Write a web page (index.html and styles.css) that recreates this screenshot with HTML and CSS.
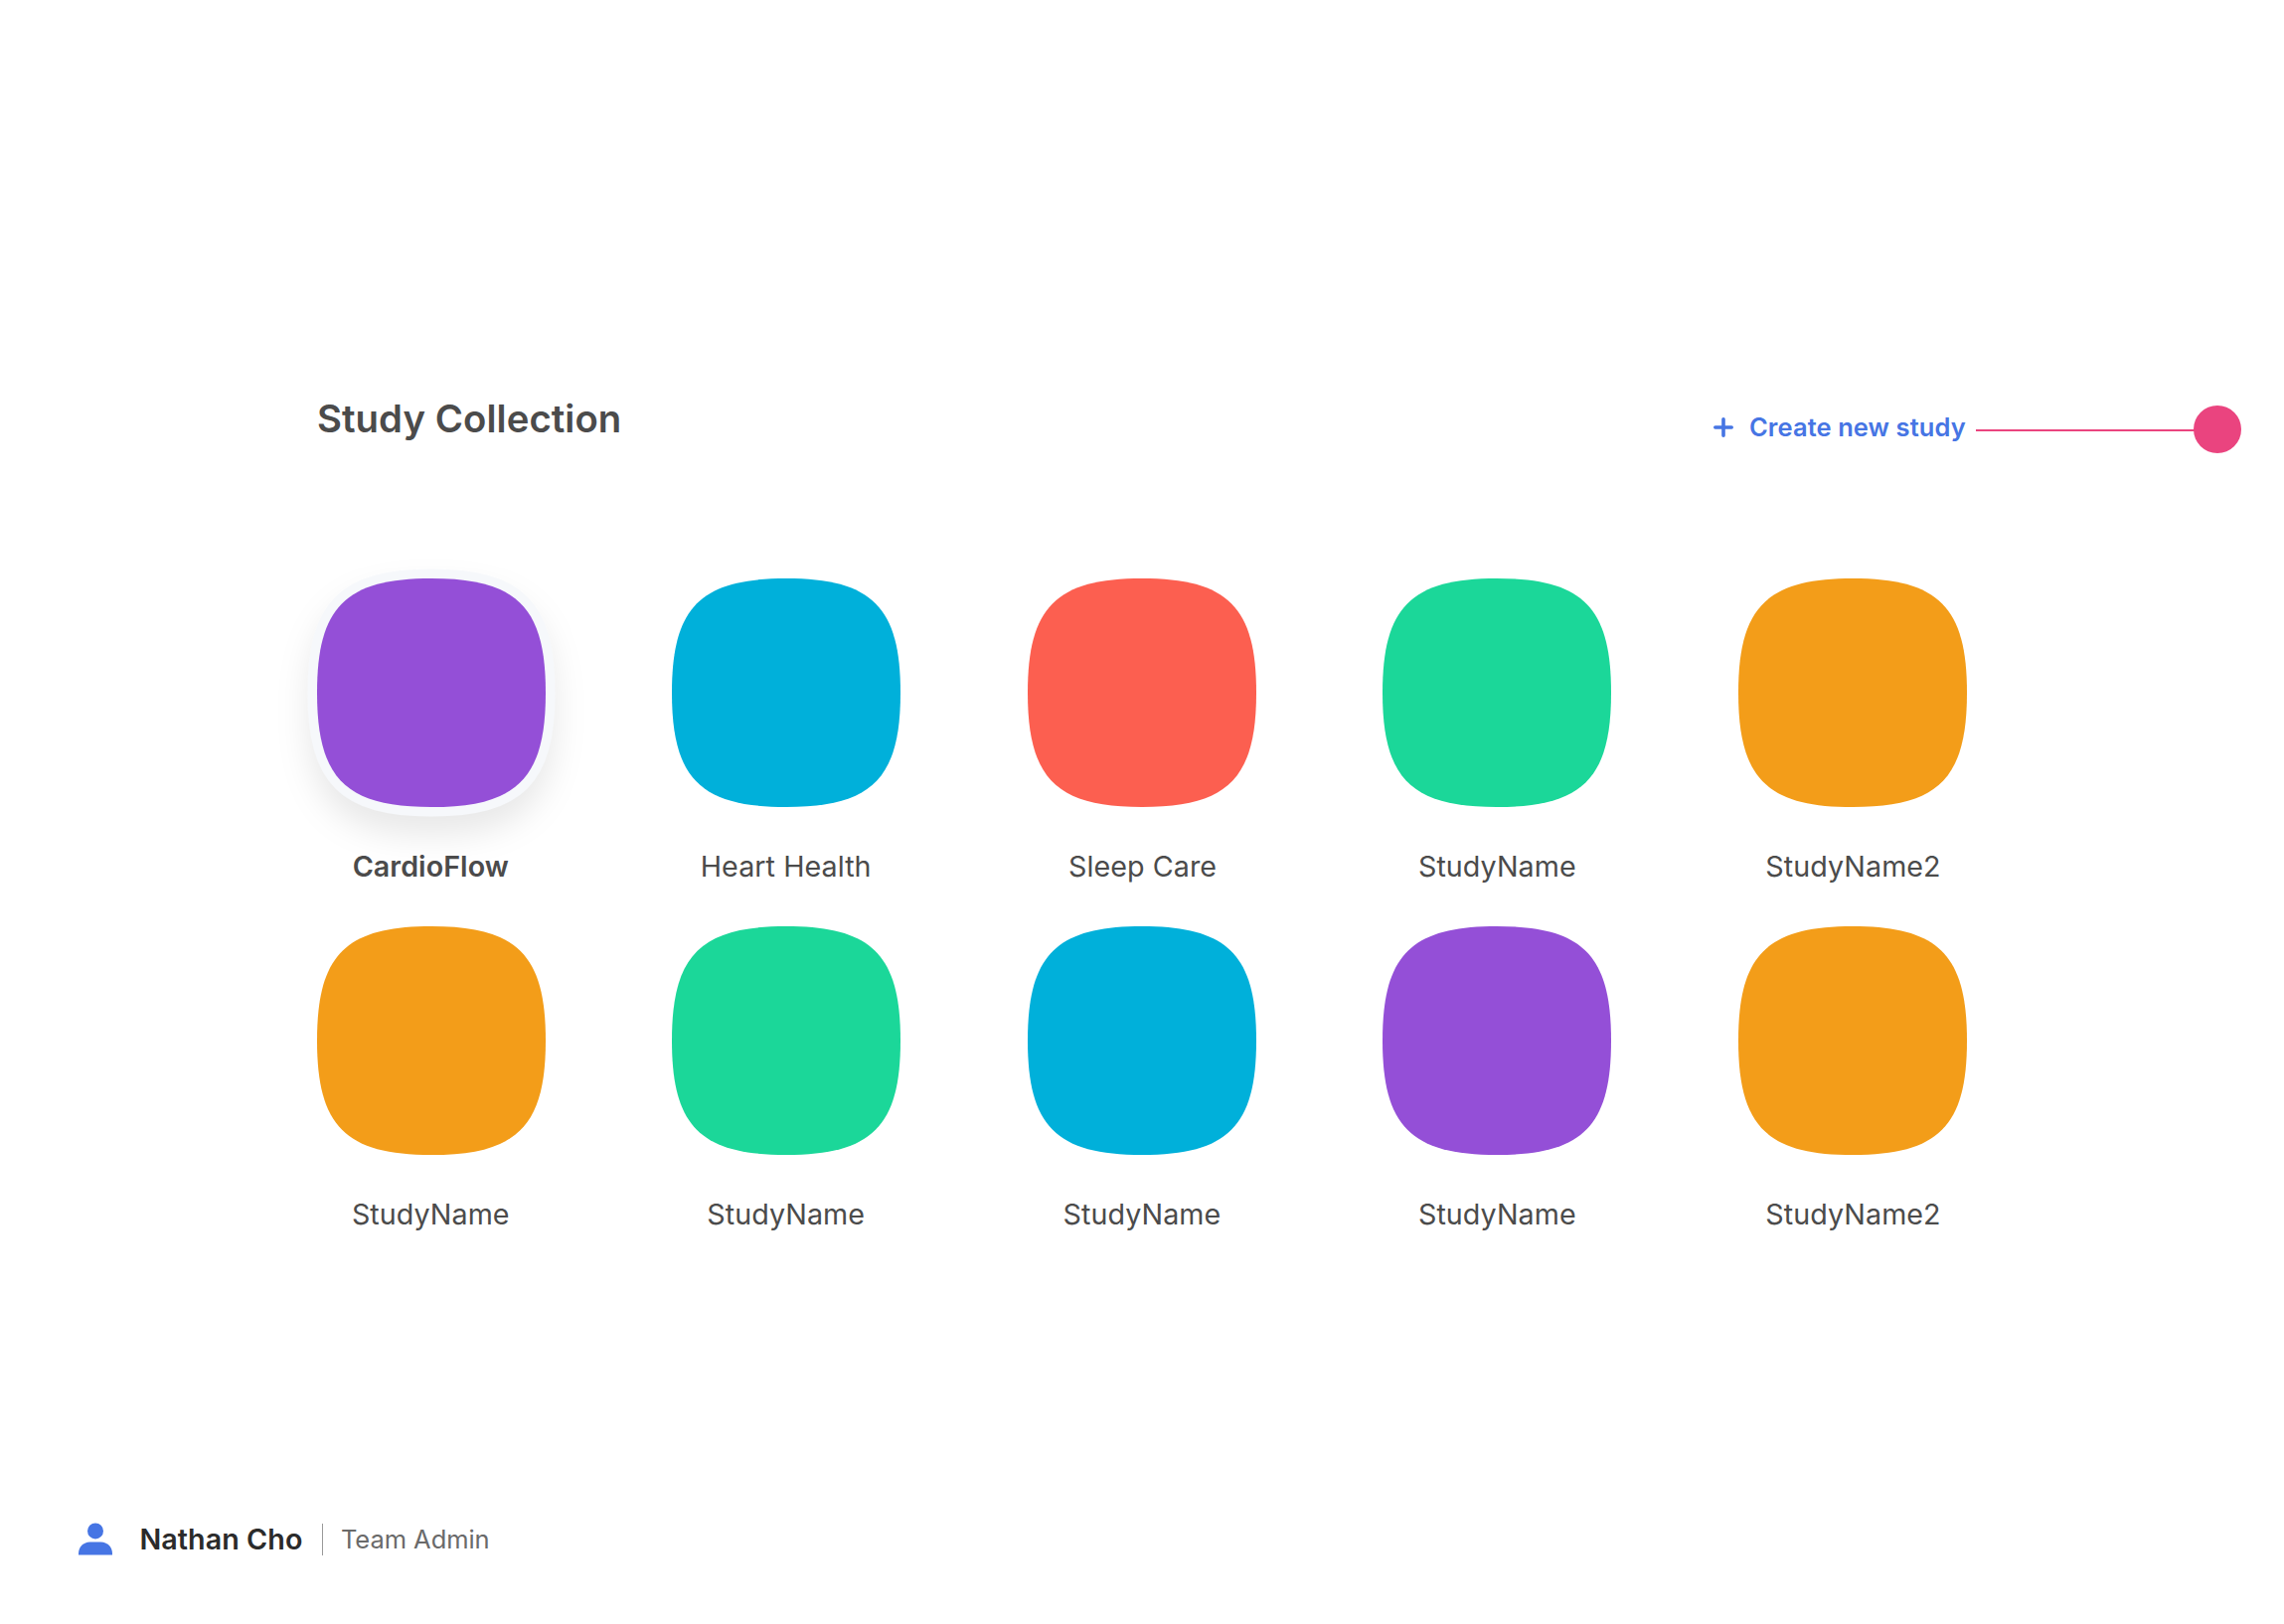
FILE: index.html
```
<!DOCTYPE html>
<html lang="en">
<head>
<meta charset="utf-8">
<title>Study Collection</title>
<link rel="stylesheet" href="styles.css">
</head>
<body>
<svg class="defs" aria-hidden="true">
  <symbol id="tile" viewBox="0 0 230 230" overflow="visible"><path d="M0 115C0 28.75 28.75 0 115 0S230 28.75 230 115 201.25 230 115 230 0 201.25 0 115Z"/></symbol>
</svg>
<main class="collection">
  <header class="heading">
    <h1 class="title">Study Collection</h1>
    <div class="create">
      <svg class="plus" viewBox="0 0 20 20"><path d="M10 1.8V18.2M1.8 10H18.2"/></svg>
      <span class="create-label">Create new study</span>
      <div class="callout"><span class="line"></span><span class="dot"></span></div>
    </div>
  </header>
  <section class="grid">
    <div class="study selected"><svg class="tile purple"><use class="ring" href="#tile"/><use href="#tile"/></svg><span class="name">CardioFlow</span></div>
    <div class="study"><svg class="tile blue"><use href="#tile"/></svg><span class="name">Heart Health</span></div>
    <div class="study"><svg class="tile red"><use href="#tile"/></svg><span class="name">Sleep Care</span></div>
    <div class="study"><svg class="tile green"><use href="#tile"/></svg><span class="name">StudyName</span></div>
    <div class="study"><svg class="tile orange"><use href="#tile"/></svg><span class="name">StudyName2</span></div>
    <div class="study"><svg class="tile orange"><use href="#tile"/></svg><span class="name">StudyName</span></div>
    <div class="study"><svg class="tile green"><use href="#tile"/></svg><span class="name">StudyName</span></div>
    <div class="study"><svg class="tile blue"><use href="#tile"/></svg><span class="name">StudyName</span></div>
    <div class="study"><svg class="tile purple"><use href="#tile"/></svg><span class="name">StudyName</span></div>
    <div class="study"><svg class="tile orange"><use href="#tile"/></svg><span class="name">StudyName2</span></div>
  </section>
</main>
<footer class="user">
  <svg class="avatar" viewBox="0 0 34 33"><circle cx="17" cy="8.4" r="8"/><path d="M0 32.4V31C0 24.5 5 19.4 11.5 19.4H22.5C29 19.4 34 24.5 34 31V32.4Z"/></svg>
  <span class="user-name">Nathan Cho</span>
  <span class="divider"></span>
  <span class="role">Team Admin</span>
</footer>
</body>
</html>
```
FILE: styles.css
```
* { box-sizing: border-box; }
body {
  margin: 0;
  height: 1634px;
  padding: 399px 319px 0 319px;
  display: flex;
  flex-direction: column;
  overflow: hidden;
  background: #fff;
  color: #4b4b4b;
  font-family: Inter, "Liberation Sans", sans-serif;
}
.defs { position: absolute; width: 0; height: 0; }
.heading { display: flex; justify-content: space-between; height: 183.4px; }
.title { margin: 0; font-size: 38.3px; line-height: 45px; font-weight: 600; letter-spacing: .08px; white-space: nowrap; }
.create { position: relative; display: flex; align-items: flex-start; padding-top: 16px; width: 255.5px; color: #4675e4; }
.plus { width: 20px; height: 20px; margin: 4.5px 16.5px 0 0; fill: none; stroke: currentColor; stroke-width: 3.6; stroke-linecap: round; }
.create-label { font-size: 25.5px; line-height: 30px; font-weight: 600; letter-spacing: .08px; white-space: nowrap; }
.callout { position: absolute; left: 264.5px; top: 9px; display: flex; align-items: center; }
.line { width: 220px; height: 2px; margin-top: 2px; background: #ea447f; }
.dot { width: 48px; height: 48px; margin-left: -1px; border-radius: 50%; background: #ea447f; }
.grid { display: grid; grid-template-columns: repeat(5, 230px); column-gap: 127.45px; grid-auto-rows: 349.5px; }
.study { display: flex; flex-direction: column; align-items: center; }
.tile { display: block; width: 230px; height: 230px; overflow: visible; flex: none; }
.name { margin-top: 43px; font-size: 28.7px; line-height: 34px; letter-spacing: .05px; white-space: nowrap; }
.study:nth-child(5n + 1) .name, .study:nth-child(5n + 2) .name { margin-right: 1.5px; }
.study:nth-child(5n) .name, .study:nth-child(3) .name { margin-left: 1.5px; }
.selected .name { font-weight: 600; }
.ring { stroke: #f6f8fb; stroke-width: 19px; filter: drop-shadow(0 19px 16px rgba(0, 0, 0, .09)); }
.purple { fill: #944fd7; }
.blue { fill: #00b0da; }
.red { fill: #fc5f50; }
.green { fill: #1bd799; }
.orange { fill: #f39d19; }
.user { display: flex; align-items: center; height: 34px; margin: 250.6px 0 0 -240px; }
.avatar { width: 34px; height: 33px; fill: #4675e4; }
.user-name { margin-left: 27.5px; font-size: 28.7px; line-height: 34px; font-weight: 600; color: #2b2b2b; white-space: nowrap; letter-spacing: .05px; }
.divider { width: 1px; height: 32px; margin: 0 17.5px 0 20px; background: #999; }
.role { font-size: 25.5px; line-height: 34px; font-weight: 380; letter-spacing: -.05px; color: #6a6a6a; white-space: nowrap; }
```
